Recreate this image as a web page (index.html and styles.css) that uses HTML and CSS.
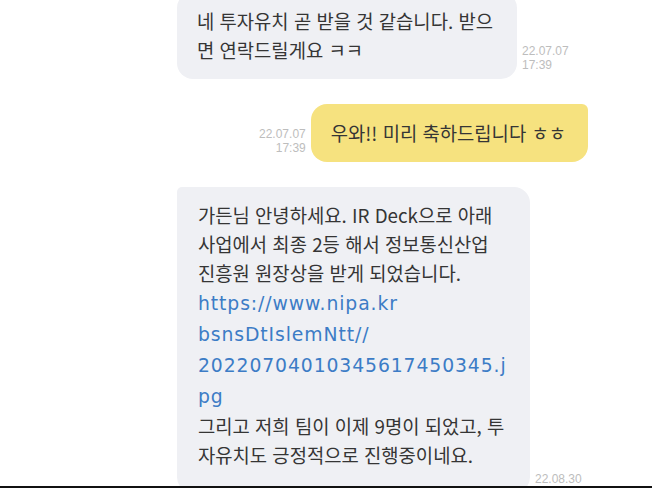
FILE: index.html
```html
<!DOCTYPE html>
<html lang="ko">
<head>
    <meta charset="UTF-8">
    <meta name="viewport" content="width=device-width, initial-scale=1.0">
    <title>채팅</title>
    <link rel="stylesheet" href="styles.css">
</head>
<body>

<div class="chat">
    <!-- 받은 메시지 -->
    <div class="row in cut">
        <div class="bubble gray first">네 투자유치 곧 받을 것 같습니다. 받으<br>면 연락드릴게요 ㅋㅋ</div>
        <div class="time">22.07.07<br>17:39</div>
    </div>

    <!-- 보낸 메시지 -->
    <div class="row out">
        <div class="time">22.07.07<br>17:39</div>
        <div class="bubble yellow">우와!! 미리 축하드립니다 ㅎㅎ</div>
    </div>

    <!-- 받은 메시지 -->
    <div class="row in">
        <div class="bubble gray tail">
            가든님 안녕하세요. IR Deck으로 아래<br>
            사업에서 최종 2등 해서 정보통신산업<br>
            진흥원 원장상을 받게 되었습니다.<br>
            <a class="link" href="#">https://www.nipa.kr<br>bsnsDtIslemNtt//<br>20220704010345617450345.j<br>pg</a><br>
            그리고 저희 팀이 이제 9명이 되었고, 투<br>
            자유치도 긍정적으로 진행중이네요.
        </div>
        <div class="time">22.08.30</div>
    </div>
</div>

</body>
</html>
```

FILE: styles.css
```css
body {
    margin: 0;
    background: #fff;
    font-family: "Noto Sans CJK KR", "Noto Sans", sans-serif;
}

.chat {
    height: 486px;
    overflow: hidden;
    border-bottom: 2px solid #111;
    display: flex;
    flex-direction: column;
    gap: 25px;
}

.row {
    display: flex;
    align-items: flex-end;
    gap: 5px;
}

.row.in {
    padding-left: 177px;
}

.row.out {
    justify-content: flex-end;
    padding-right: 64px;
}

.row.cut {
    margin-top: -8px;
}

.bubble {
    box-sizing: border-box;
    font-size: 18.8px;
    line-height: 29px;
    color: #353535;
    border-radius: 16px;
    padding: 14px 22px 15px 20px;
}

.bubble.gray {
    background: #eff0f4;
}

.bubble.first {
    width: 340px;
}

.bubble.tail {
    width: 353px;
    border-top-left-radius: 5px;
    padding: 13px 18px 24px 21px;
}

.bubble.yellow {
    background: #f6e27f;
    border-top-right-radius: 6px;
}

.link {
    color: #3c7cc6;
    text-decoration: none;
    font-family: "DejaVu Sans", "Noto Sans", sans-serif;
    letter-spacing: 0.9px;
}

.time {
    font-family: "Liberation Sans", Arial, sans-serif;
    font-size: 12px;
    line-height: 14px;
    color: #bdbdbd;
    padding-bottom: 7px;
}

.row.out .time {
    text-align: right;
}
```
